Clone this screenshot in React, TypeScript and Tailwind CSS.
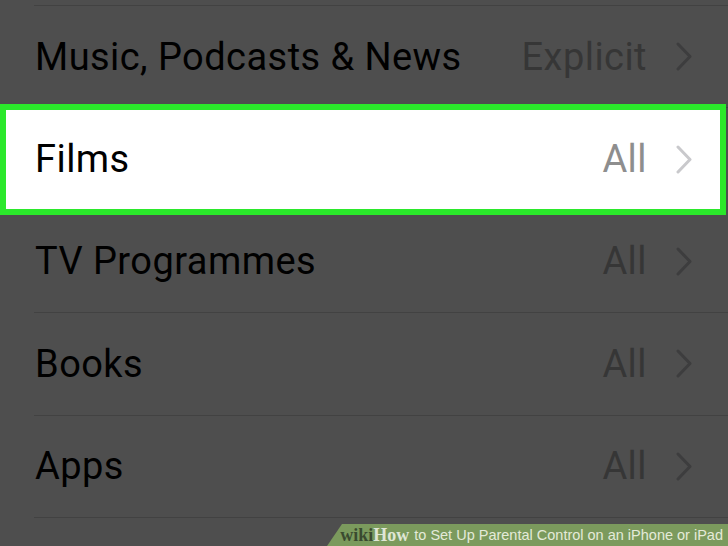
import React from "react";

const rows = [
  { label: "Music, Podcasts & News", value: "Explicit" },
  { label: "Films", value: "All", highlight: true },
  { label: "TV Programmes", value: "All" },
  { label: "Books", value: "All" },
  { label: "Apps", value: "All" },
];

function Chevron({ color }: { color: string }) {
  return (
    <svg width="16" height="29" viewBox="0 0 16 29" fill="none">
      <path d="M2 2 L14 14.5 L2 27" stroke={color} strokeWidth="3" strokeLinecap="round" strokeLinejoin="round" />
    </svg>
  );
}

export default function App() {
  return (
    <div
      className="relative w-[728px] h-[546px] overflow-hidden bg-[#4e4e4e]"
      style={{ fontFamily: "Roboto, 'Liberation Sans', sans-serif" }}
    >
      <div className="flex flex-col pt-[5px]">
        <div className="ml-[34px] h-px bg-[#424242]" />
        {rows.map((r) => (
          <div key={r.label} className="relative flex flex-col">
            {r.highlight && (
              <div className="absolute left-0 right-[2px] top-[-4px] bottom-[-4px] bg-white border-[6px] border-[#2be82b]" />
            )}
            <div className="relative flex h-[101.4px] items-center pl-[35px] pr-[36px]">
              <span className="flex-1 text-[38px] leading-none text-black tracking-[0.45px]">{r.label}</span>
              <span
                className={`text-[38px] leading-none mr-[29px] tracking-[0.45px] ${r.highlight ? "text-[#8e8e8e]" : "text-[#363636]"}`}
              >
                {r.value}
              </span>
              <Chevron color={r.highlight ? "#c9c9cc" : "#3d3d3e"} />
            </div>
            <div className={`ml-[34px] h-px ${r.highlight ? "bg-transparent" : "bg-[#424242]"}`} />
          </div>
        ))}
      </div>
      <div className="absolute bottom-0 right-0 h-[22px] w-[401px] bg-[#7b9a5d] [clip-path:polygon(15px_0,100%_0,100%_100%,0_100%)] flex items-center justify-end pr-[5px]">
        <span
          className="text-[18px] font-bold text-[#3a4a30] leading-none"
          style={{ fontFamily: "'Liberation Serif', 'DejaVu Serif', serif" }}
        >
          wiki
        </span>
        <span
          className="text-[18px] font-bold text-[#dfe6d5] leading-none"
          style={{ fontFamily: "'Liberation Serif', 'DejaVu Serif', serif" }}
        >
          How
        </span>
        <span className="ml-[5px] text-[14.5px] text-[#e4ead9] leading-none" style={{ fontFamily: "'Liberation Sans', sans-serif" }}>
          to Set Up Parental Control on an iPhone or iPad
        </span>
      </div>
    </div>
  );
}
